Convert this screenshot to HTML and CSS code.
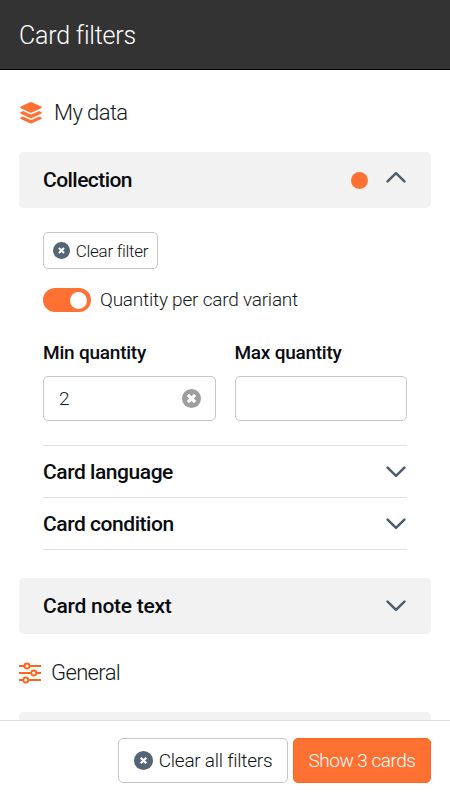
FILE: index.html
```html
<!DOCTYPE html>
<html lang="en">
<head>
<meta charset="utf-8">
<meta name="viewport" content="width=device-width, initial-scale=1">
<title>Card filters</title>
<link rel="stylesheet" href="styles.css">
</head>
<body>
<svg class="defs" aria-hidden="true">
  <symbol id="chevron" viewBox="0 0 20 12"><path d="M1.6 1.6 10 9.8 18.4 1.6" fill="none" stroke="currentColor" stroke-width="2.5" stroke-linecap="round" stroke-linejoin="round"/></symbol>
  <symbol id="clear" viewBox="0 0 20 20"><circle cx="10" cy="10" r="10" fill="currentColor"/><path d="M7 7l6 6M13 7l-6 6" stroke="#fff" stroke-width="2.3"/></symbol>
</svg>
<header class="header"><h1 class="title"><span class="t-title">Card filters</span></h1></header>
<main class="content">
  <h2 class="section section-data">
    <svg class="layers" viewBox="0 0 22 22" fill="#ff7033"><path d="M10 .3q1-.5 2 0l9.1 4.2q1.5.9 0 1.8L12 10.5q-1 .5-2 0L.9 6.3q-1.500-.9 0-1.800z"/><path d="M.9 9.900 2.900 9l6.500 3q1.600.7 3.200 0L19.100 9l2 .9q1.500.9 0 1.800L12 15.900q-1 .5-2 0L.9 11.700q-1.500-.9 0-1.800z"/><path d="M.9 15.300 2.900 14.400l6.500 3q1.600.7 3.200 0l6.500-3 2 .9q1.500.9 0 1.800L12 21.300q-1 .5-2 0L.9 17.100q-1.500-.9 0-1.800z"/></svg>
    <span class="t-data">My data</span>
  </h2>
  <section class="panel">
    <h3 class="label t-collection">Collection</h3>
    <span class="dot"></span>
    <svg class="chevron up"><use href="#chevron"/></svg>
  </section>
  <div class="body">
    <button class="button small"><svg class="icon"><use href="#clear"/></svg><span class="t-clear">Clear filter</span></button>
    <label class="switch-row"><span class="switch"></span><span class="t-switch">Quantity per card variant</span></label>
    <div class="fields">
      <div class="field"><span class="field-label t-min">Min quantity</span><div class="input"><span>2</span><svg class="reset" viewBox="0 0 20 20"><circle cx="10" cy="10" r="10" fill="#9e9e9e"/><path d="M6.200 6.200l7.600 7.600M13.800 6.200l-7.600 7.600" stroke="#fff" stroke-width="3.500"/></svg></div></div>
      <div class="field"><span class="field-label t-max">Max quantity</span><div class="input"></div></div>
    </div>
    <div class="list">
      <div class="row"><h3 class="label t-language">Card language</h3><svg class="chevron"><use href="#chevron"/></svg></div>
      <div class="row"><h3 class="label t-condition">Card condition</h3><svg class="chevron"><use href="#chevron"/></svg></div>
    </div>
  </div>
  <section class="panel"><h3 class="label t-note">Card note text</h3><svg class="chevron"><use href="#chevron"/></svg></section>
  <h2 class="section section-general">
    <svg class="sliders" viewBox="0 0 22 20" fill="#fff" stroke="#ff6518" stroke-width="2"><path d="M0 3h22M0 10h22M0 17h22"/><circle cx="8" cy="3" r="2.500" stroke-width="1.900"/><circle cx="14.800" cy="10" r="2.500" stroke-width="1.900"/><circle cx="6.800" cy="17" r="2.500" stroke-width="1.900"/></svg>
    <span class="t-general">General</span>
  </h2>
  <section class="panel"></section>
</main>
<footer class="footer">
  <button class="button"><svg class="icon"><use href="#clear"/></svg><span class="t-all">Clear all filters</span></button>
  <button class="button primary"><span class="t-show">Show 3 cards</span></button>
</footer>
</body>
</html>
```
FILE: styles.css
```css
* { box-sizing: border-box; }
body { margin: 0; height: 800px; display: flex; flex-direction: column; overflow: hidden; background: #fff; color: #111820; font: 300 19px/28px Roboto, "Liberation Sans", sans-serif; }
h1, h2, h3 { margin: 0; font-weight: inherit; }
svg { display: block; flex: none; overflow: visible; }
span { white-space: nowrap; }
.defs { position: absolute; width: 0; height: 0; }
.header { flex: none; height: 70px; padding: 2px 19px 0; display: flex; align-items: center; background: #333; border-bottom: 1px solid #000; color: #fff; }
.title { font-size: 25px; }
.t-title { letter-spacing: -.2px; }
.t-data { letter-spacing: -.6px; }
.t-collection { letter-spacing: -.55px; }
.t-clear { letter-spacing: -.3px; }
.t-switch { letter-spacing: -.22px; }
.t-min { letter-spacing: -.22px; }
.t-max { letter-spacing: -.25px; }
.t-language { letter-spacing: -.45px; }
.t-condition { letter-spacing: -.45px; }
.t-note { letter-spacing: -.27px; }
.t-general { letter-spacing: -.65px; }
.t-all { letter-spacing: -.25px; }
.t-show { letter-spacing: -.5px; }
.content { flex: 1; min-height: 0; overflow: hidden; padding: 0 19px; }
.section { display: flex; align-items: center; font-size: 22px; }
.section-data { height: 82px; padding: 3px 0 0 1px; gap: 12px; }
.section-general { height: 78px; padding-bottom: 1px; gap: 10px; }
.layers { width: 22px; height: 22px; }
.sliders { width: 22px; height: 20px; }
.panel { height: 56px; padding: 0 24px; display: flex; align-items: center; background: #f2f2f2; border-radius: 5px; }
.label { flex: 1; font-size: 21px; font-weight: 500; color: #080b10; white-space: nowrap; }
.dot { width: 17px; height: 17px; margin: 1px 18px 0 0; border-radius: 50%; background: #ff7033; }
.chevron { width: 20px; height: 12px; margin-right: 1px; color: #4b5d6d; }
.up { transform: rotate(180deg); margin-bottom: 6px; }
.body { height: 370px; padding: 24px 24px 0; }
.button { display: flex; align-items: center; justify-content: center; height: 45px; width: 170px; padding: 0; gap: 6px; border: 1px solid #c6c6c6; border-radius: 5px; background: #fff; color: #111; font: inherit; }
.small { width: 115px; height: 37px; font-size: 17px; gap: 6px; }
.icon { width: 19px; height: 19px; color: #566573; }
.small .icon { width: 17px; height: 17px; }
.switch-row { display: flex; align-items: center; gap: 9px; height: 24px; margin-top: 19px; }
.switch { display: flex; justify-content: flex-end; align-items: center; width: 48px; height: 24px; padding-right: 4px; border-radius: 12px; background: #ff7033; }
.switch::after { content: ""; width: 17px; height: 17px; border-radius: 50%; background: #fff; }
.fields { display: grid; grid-template-columns: 1fr 1fr; gap: 19px; margin-top: 27px; }
.field-label { display: block; height: 37px; font-size: 19px; font-weight: 500; color: #080b10; }
.input { display: flex; align-items: center; justify-content: space-between; height: 45px; padding: 0 14px 0 15px; border: 1px solid #c6c6c6; border-radius: 5px; }
.reset { width: 19px; height: 19px; }
.list { margin-top: 24px; border-top: 1px solid #dedede; }
.row { display: flex; align-items: center; height: 52px; border-bottom: 1px solid #dedede; }
.footer { flex: none; height: 80px; border-top: 1px solid #dedede; padding: 17px 19px 0; display: flex; justify-content: flex-end; gap: 5px; background: #fff; }
.primary { width: 138px; border-color: #ff6518; background: #ff7033; color: #fff; }
```
